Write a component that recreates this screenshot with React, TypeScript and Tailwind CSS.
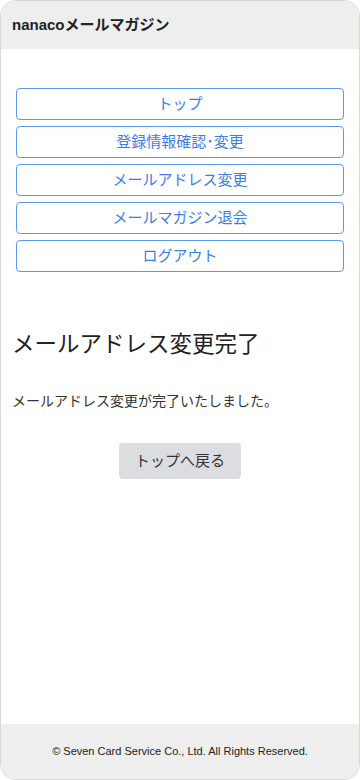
const menu = ["トップ", "登録情報確認･変更", "メールアドレス変更", "メールマガジン退会", "ログアウト"];

const App = () => {
  return (
    <div className="w-full h-[780px] bg-white" style={{ fontFamily: '"Liberation Sans", "Noto Sans CJK JP", sans-serif' }}>
      <div className="h-full flex flex-col border border-[#d9d9d2] rounded-[16px] overflow-hidden">
        <header className="h-12 shrink-0 bg-[#eeeeee] flex items-center px-[11px]">
          <h1 className="text-[15px] font-bold text-[#222]">nanacoメールマガジン</h1>
        </header>

        <main className="flex-1 pt-[39px] px-[15px]">
          <nav className="flex flex-col gap-[6px]">
            {menu.map((item) => (
              <a
                key={item}
                href="#"
                className="h-8 flex items-center justify-center border border-[#5b98ee] rounded-[4px] text-[15px] text-[#3c7de6]"
              >
                {item}
              </a>
            ))}
          </nav>

          <h2 className="mt-[57px] -mx-[4px] text-[22.5px] leading-8 text-[#222]">メールアドレス変更完了</h2>
          <p className="mt-[30px] -mx-[4px] text-[14px] leading-5 text-[#333]">メールアドレス変更が完了いたしました。</p>

          <div className="mt-[32px] flex justify-center">
            <button className="w-[122px] h-9 rounded-[4px] bg-[#dcdde1] text-[15px] text-[#333]">トップへ戻る</button>
          </div>
        </main>

        <footer className="h-[55px] shrink-0 bg-[#eeeeee] flex items-center justify-center">
          <p className="text-[11px] text-[#222]">© Seven Card Service Co., Ltd. All Rights Reserved.</p>
        </footer>
      </div>
    </div>
  );
};

export default App;
